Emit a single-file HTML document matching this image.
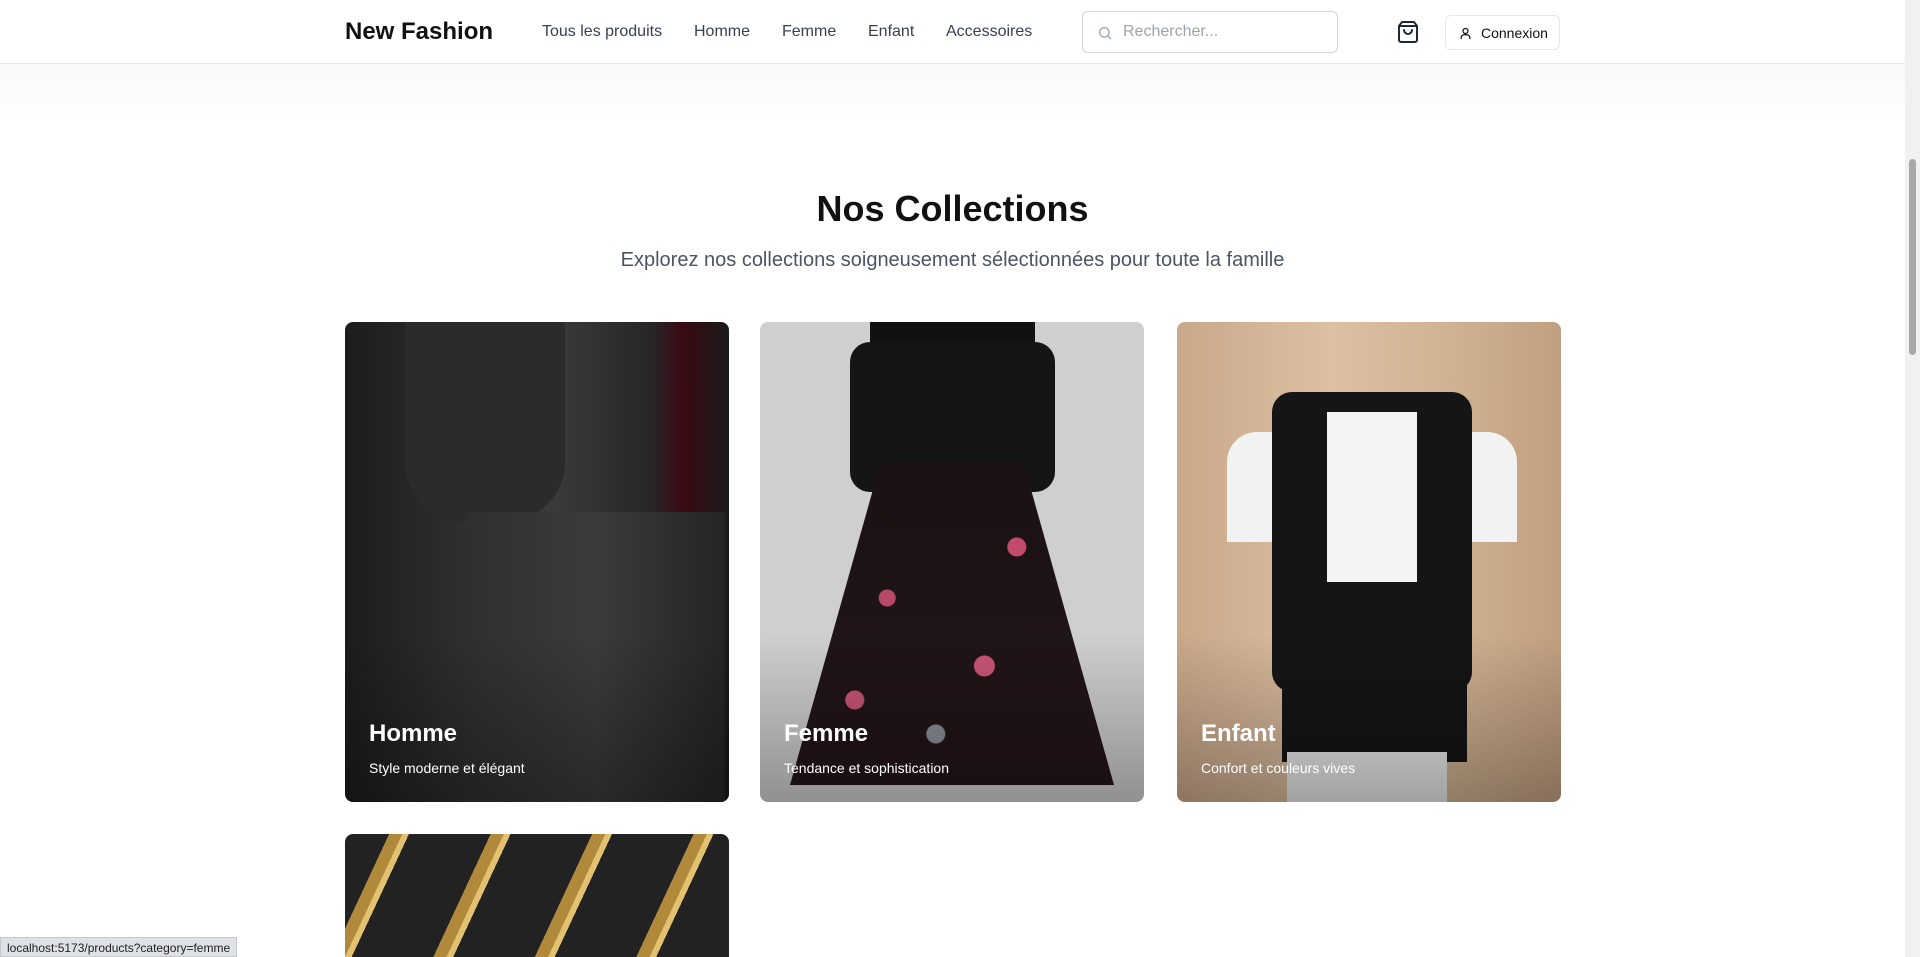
<!DOCTYPE html>
<html style="height:957px;overflow:hidden"><head><meta charset="utf-8"><style>
*{box-sizing:border-box;margin:0;padding:0}
body{width:1920px;height:957px;overflow:hidden;font-family:"Liberation Sans",Arial,sans-serif;background:#fff;position:relative}
.hdr{position:absolute;left:0;top:0;width:1905px;height:64px;border-bottom:1px solid #e5e7eb;background:#fff;z-index:5}
.logo{position:absolute;left:345px;top:18px;font-size:24px;font-weight:bold;color:#111}
.nav a{position:absolute;top:23px;font-size:16px;color:#374151;text-decoration:none}
.search{position:absolute;left:1082px;top:11px;width:256px;height:42px;border:1px solid #d1d5db;border-radius:6px}
.search span{position:absolute;left:40px;top:11px;font-size:16px;color:#9ca3af}
.btn{position:absolute;left:1445px;top:15px;width:115px;height:35px;border:1px solid #e5e7eb;border-radius:6px;font-size:14px;color:#111}
.band{position:absolute;left:0;top:64px;width:1905px;height:60px;background:linear-gradient(#f8f9fa,#fff)}
h1{position:absolute;left:0;width:1905px;top:188px;text-align:center;font-size:36px;font-weight:bold;color:#111}
.sub{position:absolute;left:0;width:1905px;top:249px;text-align:center;font-size:20px;color:#4b5563}
.card{position:absolute;width:384px;height:480px;border-radius:8px;overflow:hidden}
.card .ov{position:absolute;inset:0;background:linear-gradient(to top,rgba(0,0,0,.3),rgba(0,0,0,0) 35%)}
.card h3{position:absolute;left:24px;font-size:24px;color:#fff}
.card p{position:absolute;left:24px;font-size:14px;color:#fff}
.sb{position:absolute;left:1905px;top:0;width:15px;height:957px;background:#f1f1f1}
.sb div{position:absolute;left:4px;top:159px;width:7px;height:196px;background:#a8a8a8;border-radius:4px}
.status{position:absolute;left:0;top:937px;height:20px;padding:3px 6px;background:#dee1e6;border:1px solid #c5c8cc;font-size:12px;color:#222;z-index:6}
</style></head><body>
<div class="hdr">
<div class="logo">New Fashion</div>
<div class="nav"><a style="left:542px">Tous les produits</a><a style="left:694px">Homme</a><a style="left:782px">Femme</a><a style="left:868px">Enfant</a><a style="left:946px">Accessoires</a></div>
<div class="search"><svg style="position:absolute;left:14px;top:13px" width="16" height="16" viewBox="0 0 24 24" fill="none" stroke="#9ca3af" stroke-width="2"><circle cx="11" cy="11" r="7"/><path d="M21 21l-4.3-4.3"/></svg><span>Rechercher...</span></div>
<svg style="position:absolute;left:1396px;top:20px" width="24" height="24" viewBox="0 0 24 24" fill="none" stroke="#1f2937" stroke-width="2" stroke-linecap="round" stroke-linejoin="round"><path d="M6 2L3 6v14a2 2 0 0 0 2 2h14a2 2 0 0 0 2-2V6l-3-4z"/><path d="M3 6h18"/><path d="M16 10a4 4 0 0 1-8 0"/></svg>
<div class="btn"><svg style="position:absolute;left:12px;top:10px" width="15" height="15" viewBox="0 0 24 24" fill="none" stroke="#111" stroke-width="2"><circle cx="12" cy="8" r="4"/><path d="M5 21v-2a5 5 0 0 1 5-5h4a5 5 0 0 1 5 5v2"/></svg><span style="position:absolute;left:35px;top:9px">Connexion</span></div>
</div>
<div class="band"></div>
<h1>Nos Collections</h1>
<div class="sub">Explorez nos collections soigneusement sélectionnées pour toute la famille</div>

<div class="card" style="left:345px;top:322px;background:linear-gradient(90deg,#1c1c1e 0%,#2e2d2f 30%,#3a393b 55%,#262527 80%,#3a0a12 88%,#1a1a1a 100%)">
<div style="position:absolute;left:60px;top:0;width:160px;height:200px;background:#2b2a2c;border-radius:0 0 60px 60px"></div>
<div style="position:absolute;left:120px;top:190px;width:260px;height:290px;background:linear-gradient(90deg,#2f2e30,#3b3a3c,#252426)"></div>
<div class="ov"></div><h3 style="top:398px">Homme</h3><p style="top:438px">Style moderne et élégant</p></div>

<div class="card" style="left:760px;top:322px;background:#cfcfcf">
<div style="position:absolute;left:110px;top:0;width:165px;height:160px;background:#111;border-radius:0 0 20px 20px"></div>
<div style="position:absolute;left:90px;top:20px;width:205px;height:150px;background:#151515;border-radius:20px"></div>
<div style="position:absolute;left:30px;top:140px;width:324px;height:340px;background:radial-gradient(circle at 30% 40%,#b94a67 0 8px,transparent 9px),radial-gradient(circle at 60% 60%,#c85575 0 10px,transparent 11px),radial-gradient(circle at 45% 80%,#8a8f98 0 9px,transparent 10px),radial-gradient(circle at 70% 25%,#c44a6b 0 9px,transparent 10px),radial-gradient(circle at 20% 70%,#c85575 0 9px,transparent 10px),linear-gradient(#1a1214,#241518);clip-path:polygon(28% 0,72% 0,100% 95%,0 95%)"></div>
<div class="ov"></div><h3 style="top:398px">Femme</h3><p style="top:438px">Tendance et sophistication</p></div>

<div class="card" style="left:1177px;top:322px;background:linear-gradient(90deg,#caa88a,#dcc0a2 40%,#d0b393 70%,#c19f80)">
<div style="position:absolute;left:50px;top:110px;width:290px;height:110px;background:#f2f2f2;border-radius:30px 30px 0 0"></div>
<div style="position:absolute;left:95px;top:70px;width:200px;height:300px;background:#151515;border-radius:20px"></div>
<div style="position:absolute;left:150px;top:90px;width:90px;height:170px;background:#f4f4f4"></div>
<div style="position:absolute;left:105px;top:330px;width:185px;height:110px;background:#151515"></div>
<div style="position:absolute;left:110px;top:430px;width:160px;height:50px;background:#e8e8e8"></div>
<div class="ov"></div><h3 style="top:398px">Enfant</h3><p style="top:438px">Confort et couleurs vives</p></div>

<div class="card" style="left:345px;top:834px;height:123px;border-radius:8px 8px 0 0;background:repeating-linear-gradient(115deg,#222 0 40px,#b08a3a 40px 52px,#e2c270 52px 58px,#222 58px 92px)"></div>

<div class="sb"><div></div></div>
<div class="status">localhost:5173/products?category=femme</div>
</body></html>
